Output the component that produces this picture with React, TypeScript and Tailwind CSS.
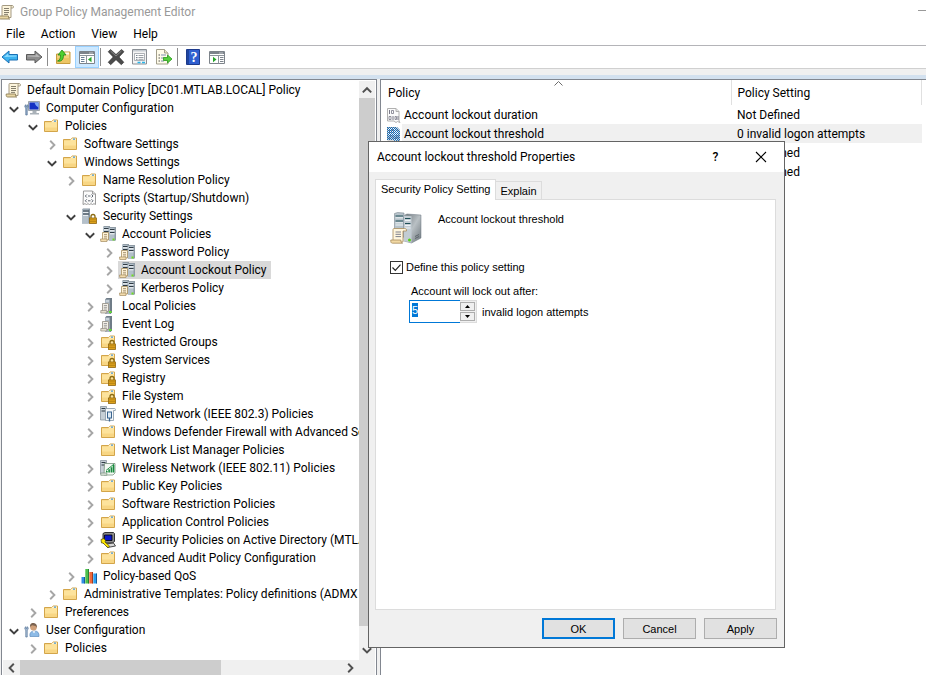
import { useEffect, useRef, useState } from "react";
import type { ReactNode } from "react";

/* ---------- small icons ---------- */

type IconName =
  | "scroll"
  | "computer"
  | "user"
  | "folder"
  | "folderLock"
  | "script"
  | "serverLock"
  | "servers"
  | "serverDoc"
  | "wired"
  | "wireless"
  | "ipsec"
  | "qos";

function FolderShape() {
  return (
    <>
      <path d="M1.500 3.500h7l1.500-1.500h4.500v11.500h-13z" fill="#f3cf7c" stroke="#d3a54a" />
      <path d="M9.500 2.500h4.500v2.500h-5.500z" fill="#fff6da" />
      <path d="M11 2.500h2v1.500h-2z" fill="#4a9be0" />
      <path d="M2 4.500h7l1-.7H14v9.200H2z" fill="#fde39c" />
      <path d="M2 9.500h12v3.500H2z" fill="#f8d684" />
    </>
  );
}

function LockShape() {
  return (
    <>
      <path d="M10 10.500V8.500a2 2 0 0 1 4 0v2" fill="none" stroke="#8a6a12" strokeWidth="1.300" />
      <rect x="8.500" y="10" width="7" height="5.500" fill="#e3a51c" stroke="#8f6610" strokeWidth=".8" />
      <path d="M9 11.800h6M9 13.600h6" stroke="#a97a10" strokeWidth=".7" />
    </>
  );
}

function ServerShape({ x, y }: { x: number; y: number }) {
  return (
    <g transform={`translate(${x} ${y})`}>
      <path d="M0 1l1-1h6v13l-1 1H0z" fill="#8f9ba5" />
      <path d="M0 1h5.500v13H0z" fill="#b3c0ca" />
      <path d="M1 2.500h4.500M1 5.500h4.500" stroke="#2f3b45" />
      <path d="M1 3.800h4.500M1 6.800h4.500" stroke="#f3f6f8" />
    </g>
  );
}

function DocShape() {
  return (
    <>
      <path d="M2.500 6.500h6v7.500h-6z" fill="#fff3d8" stroke="#a8905f" strokeWidth=".8" />
      <path d="M.5 13h6.500v2.500H.8z" fill="#f3dcae" stroke="#a58c60" strokeWidth=".7" />
      <path d="M4 8.500h3M4 10.300h3M4 12h3" stroke="#a08b6a" strokeWidth=".8" />
    </>
  );
}

function ScrollShape() {
  return (
    <>
      <path d="M4.500 1.500h9.500c1 0 1.500.6 1.500 1.700 0 .6-.5.8-1 .8h-1.500v9.500h-9V3c0-1 .1-1.500.5-1.500z" fill="#fdf5dc" stroke="#9a8f76" strokeWidth=".9" />
      <path d="M13 4V2.600c0-.7.4-1.100 1-1.100" fill="none" stroke="#9a8f76" strokeWidth=".8" />
      <path d="M1.200 12h9.300v1.500c0 .8.500 1.500 1.200 1.500H2.500c-1 0-1.500-.8-1.300-3z" fill="#e8d6a4" stroke="#8f8058" strokeWidth=".9" />
      <path d="M6 4.500h5M6 6.500h5M6 8.500h5M6 10.400h4" stroke="#76705f" strokeWidth=".9" />
    </>
  );
}

const iconArt: Record<IconName, ReactNode> = {
  scroll: <ScrollShape />,
  computer: (
    <>
      <path d="M4.500 1.500h11v9h-11z" fill="#c9d0d6" stroke="#8a939b" strokeWidth=".8" />
      <path d="M5.500 2.500h9v7h-9z" fill="#1532c4" />
      <path d="M10.500 2.500h4v5c-2-1-3.500-3-4-5z" fill="#7ea8f5" />
      <path d="M8.500 11h4v2h2.500v1.500H6V13h2.500z" fill="#aab2b9" />
      <path d="M.8 6.500c0-1 .6-1.700 1.200-1.700v2h1v-2c.7 0 1.200.7 1.200 1.700 0 .8-.4 1.300-1 1.600V15h-1.400V8.100c-.6-.3-1-.8-1-1.600z" fill="#9db6d0" stroke="#4f6f93" strokeWidth=".7" />
    </>
  ),
  user: (
    <>
      <path d="M6 14.500c-.6-4 1.500-5.500 4.500-5.500s4.800 1.700 4.500 5.500z" fill="#8dbbe6" stroke="#5d8dbf" strokeWidth=".7" />
      <circle cx="9.500" cy="5.200" r="3.300" fill="#d0a07a" />
      <path d="M6.200 5C5.500 1.500 8 .5 10 1c2.500.5 3.300 2.500 2.700 4.800L11.500 4 8 3.200z" fill="#7a6250" />
      <path d="M8.500 9.300l1.500 2 1.500-2z" fill="#fff" />
      <path d="M.8 6.500c0-1 .6-1.700 1.200-1.700v2h1v-2c.7 0 1.200.7 1.200 1.700 0 .8-.4 1.300-1 1.600V15h-1.400V8.100c-.6-.3-1-.8-1-1.600z" fill="#b9cde2" stroke="#4f6f93" strokeWidth=".7" />
    </>
  ),
  folder: <FolderShape />,
  folderLock: (
    <>
      <FolderShape />
      <LockShape />
    </>
  ),
  script: (
    <>
      <path d="M2.500 1h9l3 3v10.500l-1.500-.8-1.500.8-1.500-.8-1.500.8-1.500-.8-1.500.8-1.500-.8-2 .8z" fill="#fbfbfb" stroke="#8e8e8e" strokeWidth=".9" />
      <path d="M11.500 1v3h3" fill="#ddd" stroke="#8e8e8e" strokeWidth=".8" />
      <path d="M5.800 4.500L4.300 6l1.500 1.500M10.500 4.500L12 6l-1.500 1.500M7 6h2.500M5.800 9.300l-1.500 1.500 1.500 1.500M10.500 9.300l1.500 1.500-1.500 1.500M7 10.800h2.500" fill="none" stroke="#4c5560" strokeWidth=".9" />
    </>
  ),
  serverLock: (
    <>
      <path d="M1 1.500l1-1h7v14l-1 1H1z" fill="#8796a2" />
      <path d="M1 1.500h6.500v14H1z" fill="#b4c0ca" />
      <path d="M2 3h6M2 6h6" stroke="#263440" />
      <path d="M2 4.500h5M2 7.500h5" stroke="#e9eef2" />
      <LockShape />
    </>
  ),
  servers: (
    <>
      <ServerShape x={3} y={0} />
      <ServerShape x={9} y={1} />
      <DocShape />
      <rect x="12.500" y="12.500" width="2" height="2" fill="#6fdc1f" />
    </>
  ),
  serverDoc: (
    <>
      <path d="M5 1.500l1.500-1.500H12v14.500l-1.500 1.500H5z" fill="#6f7c87" />
      <path d="M5 1.500h4.800V16H5z" fill="#aab6c0" />
      <path d="M6 3h3M6 5.500h3" stroke="#e9eef2" />
      <path d="M2.500 5.500h6v8h-6z" fill="#f3f0e8" stroke="#8f8a80" strokeWidth=".8" />
      <path d="M.8 12.500h6v2.500h-6z" fill="#e3ddcf" stroke="#8f8a80" strokeWidth=".7" />
      <path d="M3.800 7.500h3.200M3.800 9.300h3.200M3.800 11h3" stroke="#8b8b8b" strokeWidth=".8" />
      <rect x="9" y="13" width="2.500" height="2" fill="#5fe02c" />
    </>
  ),
  wired: (
    <>
      <path d="M.5.500h6V14h-6z" fill="#c6cfd6" stroke="#7c8a95" strokeWidth=".7" />
      <path d="M1.500 2.500h4M1.500 5h4" stroke="#2f3b45" />
      <path d="M5.500 2.500h9c1 0 1.200 1 .8 2h-1.800v10h-8z" fill="#f6f8fa" stroke="#8797a5" strokeWidth=".8" />
      <rect x="7.500" y="6" width="4" height="6" fill="#dfeaf4" stroke="#39648f" />
      <path d="M9.500 12v3.500" stroke="#39648f" strokeWidth="1.300" />
    </>
  ),
  wireless: (
    <>
      <path d="M.5.500h6V14h-6z" fill="#c6cfd6" stroke="#7c8a95" strokeWidth=".7" />
      <path d="M1.500 2.500h4M1.500 5h4" stroke="#2f3b45" />
      <path d="M4.500 3.500h10.500v9.500l-2 2h-9z" fill="#f4f9f4" stroke="#77907c" strokeWidth=".8" />
      <path d="M6 12.500h1.600V11H6zM8.300 12.500h1.600V9.300H8.300zM10.600 12.500h1.600V7.300h-1.600zM12.700 12.500h1.600V5h-1.600z" fill="#168a3c" />
      <path d="M6 10.500L14 4" stroke="#168a3c" strokeWidth=".9" />
      <path d="M.8 13h6v2.300h-6z" fill="#dde4dd" stroke="#77907c" strokeWidth=".7" />
    </>
  ),
  ipsec: (
    <>
      <path d="M3 1.500L5 .5h8.500l1 1v8L12.500 11H3z" fill="#8b8b8b" stroke="#222" strokeWidth=".9" />
      <path d="M4.500 3h7.500v5.500H4.500z" fill="#0a18c8" stroke="#000" strokeWidth=".8" />
      <path d="M5.500 12l8-1 2 3-8 1.500z" fill="#d8d8d8" stroke="#222" strokeWidth=".8" />
      <path d="M1 7.500l3-1 1.500 2-.5 1.500 4.500 4-1 1.500-1.500-.5-4-4H1.500z" fill="#ffe800" stroke="#4a4300" strokeWidth=".7" />
    </>
  ),
  qos: (
    <>
      <path d="M.5 9H4v6.500H.5z" fill="#2f8de4" />
      <path d="M3.200 9H4v6.500h-.8z" fill="#164c86" />
      <path d="M4.300 1h3.500v14.500H4.300z" fill="#4cc04c" />
      <path d="M7 1h.8v14.500H7z" fill="#176a2a" />
      <path d="M8.300 4h3.500v11.500H8.300z" fill="#f0693a" />
      <path d="M11 4h.8v11.500H11z" fill="#8c2c12" />
      <path d="M12.300 5.500H16v10h-3.700z" fill="#2a9ff0" />
      <path d="M15.200 5.500h.8v10h-.8z" fill="#124a86" />
    </>
  ),
};

function Icon({ name }: { name: IconName }) {
  return (
    <svg viewBox="0 0 16 16" className="size-4 shrink-0" aria-hidden="true">
      {iconArt[name]}
    </svg>
  );
}

function Arrow({ dir, className }: { dir: "up" | "down" | "left" | "right"; className: string }) {
  const d = {
    up: "M1.500 7L5 3.500 8.500 7",
    down: "M1.500 3.500L5 7l3.500-3.500",
    left: "M6.500 1.500L3 5l3.500 3.500",
    right: "M3.500 1.500L7 5 3.500 8.500",
  }[dir];
  return (
    <svg viewBox="0 0 10 10" className={className} aria-hidden="true">
      <path d={d} fill="none" stroke="currentColor" strokeWidth="1.600" />
    </svg>
  );
}

/* ---------- policy tree ---------- */

type Node = { label: string; icon: IconName; leaf?: boolean; selected?: boolean; kids?: Node[] };

const tree: Node[] = [
  {
    label: "Computer Configuration",
    icon: "computer",
    kids: [
      {
        label: "Policies",
        icon: "folder",
        kids: [
          { label: "Software Settings", icon: "folder" },
          {
            label: "Windows Settings",
            icon: "folder",
            kids: [
              { label: "Name Resolution Policy", icon: "folder" },
              { label: "Scripts (Startup/Shutdown)", icon: "script", leaf: true },
              {
                label: "Security Settings",
                icon: "serverLock",
                kids: [
                  {
                    label: "Account Policies",
                    icon: "servers",
                    kids: [
                      { label: "Password Policy", icon: "servers" },
                      { label: "Account Lockout Policy", icon: "servers", selected: true },
                      { label: "Kerberos Policy", icon: "servers" },
                    ],
                  },
                  { label: "Local Policies", icon: "serverDoc" },
                  { label: "Event Log", icon: "serverDoc" },
                  { label: "Restricted Groups", icon: "folderLock" },
                  { label: "System Services", icon: "folderLock" },
                  { label: "Registry", icon: "folderLock" },
                  { label: "File System", icon: "folderLock" },
                  { label: "Wired Network (IEEE 802.3) Policies", icon: "wired" },
                  { label: "Windows Defender Firewall with Advanced Se", icon: "folder" },
                  { label: "Network List Manager Policies", icon: "folder", leaf: true },
                  { label: "Wireless Network (IEEE 802.11) Policies", icon: "wireless" },
                  { label: "Public Key Policies", icon: "folder" },
                  { label: "Software Restriction Policies", icon: "folder" },
                  { label: "Application Control Policies", icon: "folder" },
                  { label: "IP Security Policies on Active Directory (MTLA", icon: "ipsec" },
                  { label: "Advanced Audit Policy Configuration", icon: "folder" },
                ],
              },
              { label: "Policy-based QoS", icon: "qos" },
            ],
          },
          { label: "Administrative Templates: Policy definitions (ADMX", icon: "folder" },
        ],
      },
      { label: "Preferences", icon: "folder" },
    ],
  },
  {
    label: "User Configuration",
    icon: "user",
    kids: [{ label: "Policies", icon: "folder" }],
  },
];

function TreeItem({ node }: { node: Node }) {
  return (
    <li>
      <div className="flex h-[18px] items-center">
        {node.leaf ? (
          <span className="w-[18px] shrink-0" />
        ) : (
          <button
            type="button"
            aria-label={`${node.kids ? "Collapse" : "Expand"} ${node.label}`}
            className="flex w-[18px] shrink-0 pt-px pl-[3px]"
          >
            {node.kids ? (
              <Arrow dir="down" className="size-3 text-[#404040]" />
            ) : (
              <Arrow dir="right" className="size-3 text-[#a6a6a6]" />
            )}
          </button>
        )}
        <span
          className={
            node.selected
              ? "flex h-[18px] shrink-0 items-center gap-1.5 bg-[#d9d9d9] pr-1 pl-px"
              : "flex h-[18px] shrink-0 items-center gap-1.5 pr-1 pl-px"
          }
        >
          <Icon name={node.icon} />
          {node.label}
        </span>
      </div>
      {node.kids && (
        <ul className="pl-[19px]">
          {node.kids.map((k) => (
            <TreeItem key={k.label} node={k} />
          ))}
        </ul>
      )}
    </li>
  );
}

/* ---------- toolbar ---------- */

function ToolButton({ label, on, children }: { label: string; on?: boolean; children: ReactNode }) {
  return (
    <button
      type="button"
      aria-label={label}
      className={
        on
          ? "flex h-[22px] w-6 items-center justify-center border border-[#99d1ff] bg-[#cce8ff]"
          : "flex h-[22px] w-6 items-center justify-center"
      }
    >
      <svg viewBox="0 0 18 18" className="size-[18px] shrink-0" aria-hidden="true">
        {children}
      </svg>
    </button>
  );
}

function Separator() {
  return <span className="mr-[3px] ml-px h-[18px] w-px bg-[#8c8c8c]" />;
}

function Toolbar() {
  return (
    <div className="-ml-0.5 flex h-[22px] shrink-0 items-center">
      <ToolButton label="Back">
        <path d="M1 9l7-6v3.500h8.500v5.500H8V15z" fill="#3db4f0" stroke="#1a6fb4" strokeLinejoin="round" />
        <path d="M3 9l4.200-3.500V7.500h8.300v1z" fill="#8fdcff" />
      </ToolButton>
      <ToolButton label="Forward">
        <path d="M17 9l-7-6v3.500H1.500v5.500H10V15z" fill="#8d8d8d" stroke="#5a5a5a" strokeLinejoin="round" />
        <path d="M15 9l-4.200-3.500V7.500H2.500v1z" fill="#b9b9b9" />
      </ToolButton>
      <Separator />
      <ToolButton label="Up one level">
        <path d="M2.500 6h5l1.500-2h7v11.500H2.500z" fill="#f3d27c" stroke="#c79c3d" />
        <path d="M11 4.500h4v2h-4z" fill="#fffbe8" />
        <path d="M3 10h12.500v5H3z" fill="#edc564" />
        <path d="M3.500 13c2.500-.5 3-3 3-6H4L8 2l4 5H9.500c0 4.500-2 7-6 6z" fill="#4fd02f" stroke="#238a18" strokeWidth=".8" />
      </ToolButton>
      <ToolButton label="Show/Hide Console Tree" on>
        <path d="M1.500 3.500h15v12h-15z" fill="#fff" stroke="#7d838a" />
        <path d="M2 4h14v2H2z" fill="#7d848c" />
        <path d="M11.500 5h1M13.500 5h1" stroke="#fff" />
        <path d="M2 7.500h14M8.500 8v7.500" stroke="#8d949b" />
        <path d="M3 9.500h3.500M3 11.500h3.500M3 13.500h3.500" stroke="#6b7f95" />
        <path d="M13.500 8.800v5.400l-3.500-2.700z" fill="#26a52a" />
      </ToolButton>
      <Separator />
      <ToolButton label="Delete">
        <path d="M3.500 1.500L9 6.500l5.500-5 2.500 2.200L12 9l4.800 5.300-2.500 2.400L9 11.700l-5.300 5L1.200 14.300 6.200 9 1.200 3.700z" fill="#4b4b4b" stroke="#2b2b2b" strokeWidth=".6" strokeLinejoin="round" />
        <path d="M3.500 3L9 8l5.500-5" fill="none" stroke="#8a8a8a" strokeWidth=".9" />
      </ToolButton>
      <ToolButton label="Properties">
        <path d="M1.500 1.500h14v14.500h-14z" fill="#f4f4f4" stroke="#8a8f95" />
        <path d="M2 2h13v1.500H2z" fill="#c6ccd2" />
        <path d="M3.500 5.500h10v7h-10z" fill="#fff" stroke="#9aa0a6" strokeWidth=".8" />
        <path d="M5 7.500h1.500M5 9.500h1.500M5 11.300h1.500" stroke="#77838f" />
        <path d="M7.500 7.500h5M7.500 9.500h5M7.500 11.300h5" stroke="#9aa0a6" />
        <path d="M6.500 14.500h3M11 14.500h3" stroke="#29b6ea" strokeWidth="1.400" />
      </ToolButton>
      <ToolButton label="Export List">
        <path d="M1.500 1.500h8l3.500 3.500v11H1.500z" fill="#fffbe9" stroke="#a39f8c" />
        <path d="M9.500 1.500V5H13" fill="#eee6c6" stroke="#a39f8c" />
        <path d="M3.500 7h1.500M3.500 10h1.500M3.500 13h1.500" stroke="#555" />
        <path d="M6 7h5M6 10h3M6 13h3" stroke="#7f8fb0" />
        <path d="M8.500 9.500h4V7l4.500 4-4.500 4v-2.500h-4z" fill="#58cf3d" stroke="#279a1d" strokeWidth=".8" />
      </ToolButton>
      <Separator />
      <ToolButton label="Help">
        <path d="M2.500 1.500h13v15h-13z" fill="#2f5fd0" stroke="#1d3a8c" />
        <path d="M3 2h2v14H3z" fill="#1f459f" />
        <text x="10" y="14" textAnchor="middle" fill="#fff" fontSize="14" fontWeight="700" fontFamily="Liberation Serif, serif">
          ?
        </text>
      </ToolButton>
      <ToolButton label="Show/Hide Action Pane">
        <path d="M1.500 3.500h15v12h-15z" fill="#fff" stroke="#7d838a" />
        <path d="M2 4h14v2H2z" fill="#7d848c" />
        <path d="M11.500 5h1M13.500 5h1" stroke="#fff" />
        <path d="M2 7.500h14M10.500 8v7.500" stroke="#8d949b" />
        <path d="M12 9.500h3.500M12 11.500h3.500M12 13.500h3.500" stroke="#7d848c" />
        <path d="M5 8.800v5.400l3.500-2.700z" fill="#26a52a" />
      </ToolButton>
    </div>
  );
}

/* ---------- policy list ---------- */

function BinaryIcon({ marked }: { marked?: boolean }) {
  return (
    <svg viewBox="0 0 16 16" className="size-4 shrink-0" aria-hidden="true">
      <defs>
        <pattern id="dither" width="2" height="2" patternUnits="userSpaceOnUse">
          <rect width="1" height="1" fill="#0f6cbd" />
          <rect x="1" y="1" width="1" height="1" fill="#0f6cbd" />
        </pattern>
      </defs>
      <path d="M1.500 1.500h8.500l3 3v9.500l1 1.500-2.500-1-1.500 1-2-1.500H1.500z" fill="#fbfbfb" stroke="#b0b0b0" />
      <path d="M10 1.500v3h3" fill="#e4e4e4" stroke="#b0b0b0" />
      <path d="M3.500 3v4M7 9v4M12 9v4" stroke="#7a7a88" />
      <path d="M5.500 3.500h2v3h-2zM3 9.500h2v3H3zM9 9.500h1.500v3H9z" fill="none" stroke="#7a7a88" strokeWidth=".8" />
      {marked && <path d="M1 1h10l3 3v11.500l-2.500-1-2 1-2-1.500H1z" fill="url(#dither)" />}
    </svg>
  );
}

type Policy = { id: number; name?: string; value: string; marked?: boolean };

const policies: Policy[] = [
  { id: 1, name: "Account lockout duration", value: "Not Defined" },
  { id: 2, name: "Account lockout threshold", value: "0 invalid logon attempts", marked: true },
  { id: 3, value: "Not Defined" },
  { id: 4, value: "Not Defined" },
];

function PolicyTable() {
  return (
    <table className="w-[541px] table-fixed border-collapse text-left">
      <thead>
        <tr className="h-[25px]">
          <th className="w-[350px] border-r border-[#e0e0e0] p-0 pl-[7px] font-normal">
            <div className="flex h-[25px] items-center">
              <span className="flex-1">Policy</span>
              <svg viewBox="0 0 9 5" className="mt-px mr-[168px] h-[5px] w-[9px] self-start" aria-hidden="true">
                <path d="M.5 4.500l4-4 4 4" fill="none" stroke="#6b6b6b" />
              </svg>
            </div>
          </th>
          <th className="border-r border-[#e0e0e0] p-0 pl-1.5 font-normal">Policy Setting</th>
        </tr>
      </thead>
      <tbody>
        {policies.map((p) => (
          <tr key={p.id} className="h-[19px]">
            <td className="p-0 pl-[5px]">
              <div className="flex h-[19px] items-center">
                <BinaryIcon marked={p.marked} />
                <span
                  className={
                    p.marked
                      ? "flex h-[19px] flex-1 items-center bg-[#f0f0f0] pl-0.5"
                      : "flex h-[19px] flex-1 items-center pl-0.5"
                  }
                >
                  {p.name}
                </span>
              </div>
            </td>
            <td className={p.marked ? "bg-[#f0f0f0] p-0 pl-1.5" : "p-0 pl-1.5"}>{p.value}</td>
          </tr>
        ))}
      </tbody>
    </table>
  );
}

/* ---------- properties dialog ---------- */

function BigServerIcon() {
  return (
    <svg viewBox="0 0 32 32" className="size-8 shrink-0" aria-hidden="true">
      <defs>
        <linearGradient id="side" x1="0" y1="0" x2="1" y2="1">
          <stop offset="0" stopColor="#6d767c" />
          <stop offset=".5" stopColor="#b9c0c4" />
          <stop offset="1" stopColor="#6c757b" />
        </linearGradient>
      </defs>
      <path d="M4.500 1.500l3-1 6.500.5v24l-6 2-3.500-2z" fill="#b7c3cb" stroke="#6b7780" strokeWidth=".5" />
      <path d="M5.500 4h7.500M5.500 9h7.500" stroke="#1f4f57" strokeWidth="1.200" />
      <path d="M5.500 5.800h7.500M5.500 10.800h7.500M5.500 13h7.500" stroke="#eef3f5" />
      <path d="M14 3.500l3-1.500 14 1v23L21.500 31l-7.500-2z" fill="url(#side)" stroke="#6b7780" strokeWidth=".5" />
      <path d="M14 3.500l7.500.7v26.600L14 29z" fill="#c2ccd3" />
      <path d="M15 6.500h5.500M15 11.500h5.500" stroke="#1f4f57" strokeWidth="1.200" />
      <path d="M15 8.500h5.500M15 13.500h5.500M15 16h5.500" stroke="#eef3f5" />
      <path d="M25 24.500l4-2M25 26.500l4-2" stroke="#4f585e" strokeWidth=".8" />
      <circle cx="19.500" cy="28" r="1.500" fill="#55d016" />
      <path d="M4 16.500h10.500c1.800 0 2.200 1 2 2.500H13v11H3V18c0-1 .3-1.500 1-1.500z" fill="#fff6de" stroke="#a78c5c" strokeWidth=".8" />
      <path d="M.8 28h10c0 1.800.6 2.700 1.700 3.200H2.500C1 31.200.6 30 .8 28z" fill="#f2d9a4" stroke="#a78c5c" strokeWidth=".8" />
      <path d="M5.500 20h5.500M5.500 22.300h5.500M5.500 24.600h5.500" stroke="#7d7f8c" />
    </svg>
  );
}

const bottomButtons = [
  { label: "OK", primary: true },
  { label: "Cancel" },
  { label: "Apply" },
];

function PropertiesDialog() {
  const attempts = useRef<HTMLInputElement>(null);
  const [defined, setDefined] = useState(true);
  const [value, setValue] = useState("5");

  useEffect(() => {
    attempts.current?.focus();
    attempts.current?.select();
  }, []);

  const step = (by: number) => setValue((v) => String(Math.max(0, (Number(v) || 0) + by)));

  return (
    <div
      role="dialog"
      aria-label="Account lockout threshold Properties"
      className="absolute top-[141px] left-[368px] flex w-[417px] flex-col border border-[#646464] bg-[#f0f0f0] font-['Liberation_Sans',Arial,sans-serif] text-[11px] leading-[14px] text-black"
    >
      <header className="flex h-[30px] items-center bg-white pl-2 font-['Roboto',sans-serif] text-[12px]">
        <h2 className="flex-1">Account lockout threshold Properties</h2>
        <button type="button" aria-label="Help" className="w-[45px] text-center font-medium">
          ?
        </button>
        <button type="button" aria-label="Close" className="flex w-[46px] justify-center">
          <svg viewBox="0 0 12 12" className="size-3" aria-hidden="true">
            <path d="M1 1l10 10M11 1L1 11" stroke="#000" strokeWidth="1.100" />
          </svg>
        </button>
      </header>

      <div className="flex flex-col px-1.5 pt-[7px]">
        <div role="tablist" className="z-10 -mb-px flex items-end">
          <button
            type="button"
            role="tab"
            aria-selected="true"
            className="h-[21px] border border-b-0 border-[#dcdcdc] bg-white px-[5px] pb-0.5"
          >
            Security Policy Setting
          </button>
          <button
            type="button"
            role="tab"
            aria-selected="false"
            className="h-[19px] border border-l-0 border-[#dcdcdc] bg-[#f0f0f0] px-1"
          >
            Explain
          </button>
        </div>

        <div role="tabpanel" className="mr-0.5 h-[411px] border border-[#dcdcdc] bg-white px-3.5 pt-3">
          <div className="flex items-start gap-4">
            <BigServerIcon />
            <p>Account lockout threshold</p>
          </div>

          <label className="mt-4 flex items-center gap-[3px]">
            <span className="relative flex">
              <input
                type="checkbox"
                checked={defined}
                onChange={(e) => setDefined(e.target.checked)}
                className="size-[13px] appearance-none border border-[#333] bg-white"
              />
              {defined && (
                <svg viewBox="0 0 13 13" className="pointer-events-none absolute inset-0 size-[13px]" aria-hidden="true">
                  <path d="M2.500 6.500l2.800 2.800 5.200-5.600" fill="none" stroke="#222" strokeWidth="1.200" />
                </svg>
              )}
            </span>
            Define this policy setting
          </label>

          <div className="mt-2.5 ml-[19px]">
            <label htmlFor="attempts" className="pl-0.5">
              Account will lock out after:
            </label>
            <div className="mt-0.5 flex items-center gap-[5px]">
              <div className="flex h-[23px] w-[68px]">
                <input
                  id="attempts"
                  ref={attempts}
                  inputMode="numeric"
                  value={value}
                  onChange={(e) => setValue(e.target.value)}
                  className="w-[51px] border border-r-0 border-[#0078d7] bg-white pb-1 pl-0.5 outline-none selection:bg-[#0078d7] selection:text-white"
                />
                <div className="flex w-[17px] flex-col gap-px border border-l-0 border-[#dcdcdc] bg-[#f0f0f0] p-px pl-0">
                  <button
                    type="button"
                    aria-label="Increase"
                    onClick={() => step(1)}
                    className="flex flex-1 items-center justify-center border border-[#adadad] bg-[#f0f0f0]"
                  >
                    <svg viewBox="0 0 5 3" className="h-[3px] w-[5px]" aria-hidden="true">
                      <path d="M2.500 0L5 3H0z" />
                    </svg>
                  </button>
                  <button
                    type="button"
                    aria-label="Decrease"
                    onClick={() => step(-1)}
                    className="flex flex-1 items-center justify-center border border-[#adadad] bg-[#f0f0f0]"
                  >
                    <svg viewBox="0 0 5 3" className="h-[3px] w-[5px]" aria-hidden="true">
                      <path d="M0 0h5L2.500 3z" />
                    </svg>
                  </button>
                </div>
              </div>
              <span>invalid logon attempts</span>
            </div>
          </div>
        </div>
      </div>

      <footer className="flex justify-end gap-2 px-[7px] pt-2 pb-2">
        {bottomButtons.map((b) => (
          <button
            key={b.label}
            type="button"
            className={
              b.primary
                ? "h-[21px] w-[73px] border-2 border-[#0078d7] bg-[#e1e1e1]"
                : "h-[21px] w-[73px] border border-[#adadad] bg-[#e1e1e1]"
            }
          >
            {b.label}
          </button>
        ))}
      </footer>
    </div>
  );
}

/* ---------- window ---------- */

export default function App() {
  return (
    <div className="relative flex h-screen flex-col overflow-hidden bg-white font-['Roboto',sans-serif] text-[12px] leading-[18px] text-black">
      <header className="flex h-6 shrink-0 items-center gap-1.5">
        <span className="-ml-0.5">
          <Icon name="scroll" />
        </span>
        <h1 className="flex-1 text-[#999]">Group Policy Management Editor</h1>
        <button type="button" aria-label="Minimize" className="flex w-2 pb-1">
          <span className="h-px flex-1 bg-[#999]" />
        </button>
      </header>

      <nav className="flex h-[22px] shrink-0 items-center gap-4 border-b border-[#b4b4b8] pb-0.5 pl-1.5">
        <button type="button">File</button>
        <button type="button">Action</button>
        <button type="button">View</button>
        <button type="button">Help</button>
      </nav>

      <Toolbar />
      <div className="h-[7px] shrink-0 border-t border-[#d0d0d0] bg-[#f0f0f0]" />
      <div className="h-1 shrink-0 bg-[#d3e1ef]" />

      <main className="flex min-h-0 flex-1 gap-[3px] bg-[#f0f0f0] pl-px">
        <section className="flex w-[376px] shrink-0 flex-col border border-b-0 border-[#828790] bg-white px-px">
          <div className="flex min-h-0 flex-1">
            <div className="min-w-0 flex-1 overflow-hidden pt-px pl-0.5 whitespace-nowrap">
              <div className="flex h-[18px] items-center gap-1.5">
                <Icon name="scroll" />
                Default Domain Policy [DC01.MTLAB.LOCAL] Policy
              </div>
              <ul>
                {tree.map((n) => (
                  <TreeItem key={n.label} node={n} />
                ))}
              </ul>
            </div>
            <div className="mt-px flex w-4 shrink-0 flex-col items-center bg-[#f0f0f0]">
              <div className="flex h-[17px] items-center">
                <Arrow dir="up" className="size-3 text-[#505050]" />
              </div>
              <div className="w-full flex-1 bg-[#cdcdcd]" />
              <div className="flex h-[34px] items-end pb-1">
                <Arrow dir="down" className="size-3 text-[#505050]" />
              </div>
            </div>
          </div>
          <div className="flex h-[15px] shrink-0 items-center bg-[#f0f0f0]">
            <div className="flex w-[17px] justify-center">
              <Arrow dir="left" className="size-3 text-[#505050]" />
            </div>
            <div className="h-full w-[201px] bg-[#cdcdcd]" />
            <div className="flex flex-1 justify-end pr-[19px]">
              <Arrow dir="right" className="size-3 text-[#505050]" />
            </div>
          </div>
        </section>

        <section className="min-w-0 flex-1 overflow-hidden border-t border-l border-[#828790] bg-white">
          <PolicyTable />
        </section>
      </main>

      <PropertiesDialog />
    </div>
  );
}
